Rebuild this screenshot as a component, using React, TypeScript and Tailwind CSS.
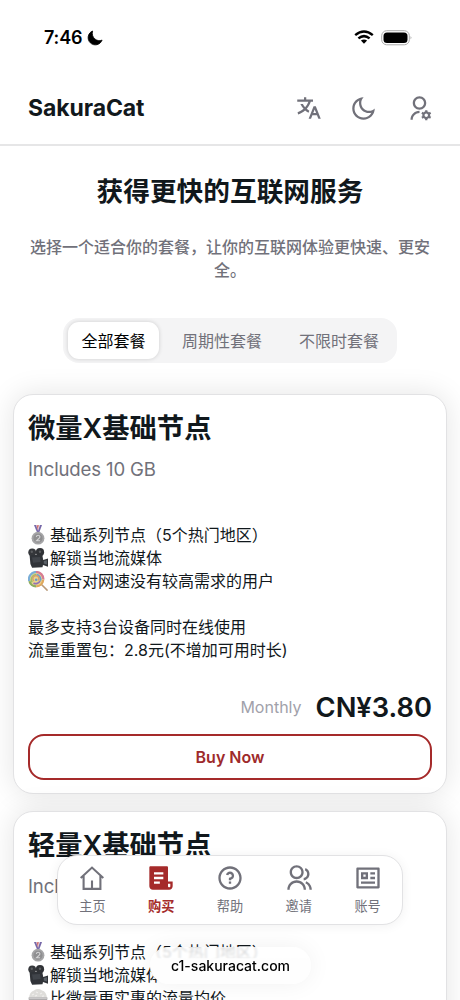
import React from "react";
import {
  RiTranslate2,
  RiMoonLine,
  RiUserSettingsLine,
  RiFileList3Fill,
  RiQuestionLine,
  RiGroupLine,
  RiProfileLine,
} from "react-icons/ri";

function Medal() {
  return (
    <svg viewBox="0 0 20 20" className="h-5 w-5">
      <path d="M6 0h8l-3 8H9z" fill="#eceaf2" />
      <path d="M6 0h2l2.5 7-1.2 1z" fill="#7668a8" />
      <path d="M14 0h-2L9.7 7l1.3 1z" fill="#7668a8" />
      <path d="M8.6 0h1l.8 4-.6 1zM11.2 0h-.8l-.5 4z" fill="#d2605f" />
      <circle cx="10" cy="13.2" r="6.4" fill="#a5a5a7" />
      <circle cx="10" cy="13.2" r="5" fill="#8f8f91" stroke="#aaaaac" strokeWidth=".7" />
      <path d="M8.3 11.8q.3-1.5 1.8-1.5t1.8 1.4q0 .9-1.2 1.9l-2.2 2.2h3.6" fill="none" stroke="#d4d4d5" strokeWidth="1.1" />
    </svg>
  );
}

function Camera() {
  return (
    <svg viewBox="0 0 20 20" className="h-5 w-5">
      <circle cx="4.2" cy="4.3" r="3.9" fill="#35373b" />
      <circle cx="12" cy="4.2" r="4.1" fill="#303236" />
      <path d="M1.6 7.2l12.6-.6 1 5.4 4.8-1.6v8.4l-5-1.9-.5 2.4-10.4.4L2.4 16z" fill="#303338" />
      <path d="M4 9.5l8-.5.6 5-7.6.8z" fill="#40444a" />
      <path d="M15.8 13l3.1-.8v4.4l-3.1-1.1z" fill="#5b6168" />
      <circle cx="3.8" cy="3.8" r="1.2" fill="#5c5e61" />
      <circle cx="12" cy="3.7" r="1.2" fill="#5c5e61" />
    </svg>
  );
}

function Lollipop() {
  return (
    <svg viewBox="0 0 20 20" className="h-5 w-5">
      <path d="M12.5 12.5l6.6 6.6" stroke="#b99a79" strokeWidth="1.5" strokeLinecap="round" />
      <circle cx="8.3" cy="8.2" r="7.9" fill="#ead68c" />
      <path d="M1.2 10A7.2 7.2 0 0 1 8 1" fill="none" stroke="#7aaed8" strokeWidth="2.2" />
      <path d="M8 1a7.2 7.2 0 0 1 7.4 7.4" fill="none" stroke="#d77b94" strokeWidth="2.2" />
      <path d="M15.2 9a7.2 7.2 0 0 1-7 6.4" fill="none" stroke="#e0a75e" strokeWidth="2.2" />
      <path d="M8 15.3a7 7 0 0 1-6.6-5" fill="none" stroke="#8cac60" strokeWidth="2.2" />
      <path d="M4 11.3A5.2 5.2 0 0 1 8 3.7" fill="none" stroke="#9fbe64" strokeWidth="1.8" />
      <path d="M8.5 3.7a4.6 4.6 0 0 1 3.8 6" fill="none" stroke="#6d9fd0" strokeWidth="1.8" />
      <path d="M12 10a4.5 4.5 0 0 1-6.5 2" fill="none" stroke="#9270b6" strokeWidth="1.8" />
      <path d="M6 10a3 3 0 1 1 4.2-.5" fill="none" stroke="#d9a06e" strokeWidth="1.5" />
      <circle cx="8.2" cy="8.7" r="1.3" fill="#6a9ac5" />
    </svg>
  );
}

function RiceBowl() {
  return (
    <svg viewBox="0 0 20 20" className="h-5 w-5">
      <path d="M1 10Q1.5 3.5 6 2.4 10-.2 14 2.4q4.5 1 5 7.6z" fill="#deddda" />
      <path d="M4 7l2-1M8 4l2 .8M12 6l2-1M7 8l2-.6M14 8.4l2-.5" stroke="#efeeec" strokeWidth="1.1" />
      <path d="M.5 9.5h19Q19 17 13.5 18.6h-7Q1 17 .5 9.5z" fill="#aaa8a9" />
      <path d="M1.2 10.5h17.6" stroke="#cac8c9" strokeWidth="1.2" />
    </svg>
  );
}

function HomeIcon() {
  return (
    <svg viewBox="0 0 28 28" className="h-7 w-7" fill="none" stroke="currentColor" strokeWidth="2.1">
      <path d="M2.7 14.1L14 3.6l11.3 10.5M5.6 12v12.9h16.8V12M14 24.5v-8" />
    </svg>
  );
}

function StatusBar() {
  return (
    <div className="flex h-[74px] items-center justify-between pt-px pr-[47px] pl-[44px] text-black">
      <div className="flex items-center gap-[5px]">
        <span className="text-[18px] leading-6 font-semibold tracking-[-0.15px]">7:46</span>
        <svg viewBox="0 0 16 16" className="h-4 w-4">
          <path d="M5.6 1A7.2 7.2 0 1 0 15.1 10.1C10 12.4 3.8 7.5 5.6 1z" fill="currentColor" stroke="currentColor" strokeWidth=".8" strokeLinejoin="round" />
        </svg>
      </div>
      <div className="flex items-center gap-[7px]">
        <svg viewBox="0 0 20 15" className="h-[15px] w-5" fill="none" stroke="currentColor" strokeWidth="2.5">
          <path d="M1.2 5.1q8.8-7.1 17.6 0M4.4 8.4q5.6-4.6 11.2 0" />
          <path d="M6.9 10.6q3.1-2 6.2 0L10 13.8z" fill="currentColor" stroke="none" />
        </svg>
        <svg viewBox="0 0 32 16" className="h-4 w-8">
          <rect x=".7" y=".7" width="27.6" height="14.1" rx="5" fill="white" stroke="#aaa" />
          <rect x="2.5" y="2.5" width="24" height="10.5" rx="3.5" fill="black" />
          <path d="M29.6 6q1.8 1.8 0 3.5z" fill="#999" />
        </svg>
      </div>
    </div>
  );
}

function Header() {
  return (
    <header className="flex h-[72px] items-center justify-between border-b-2 border-[#e6e6e7] pr-[27px] pb-[2px] pl-[28px]">
      <h1 className="text-[23px] leading-8 font-bold tracking-[-0.1px]">SakuraCat</h1>
      <div className="flex items-center text-[#71717a]">
        <RiTranslate2 size={27} className="mr-[28px]" />
        <RiMoonLine size={27} className="mr-[29px]" />
        <RiUserSettingsLine size={27} />
      </div>
    </header>
  );
}

interface Feature {
  icon: React.ReactNode;
  text: string;
}

function PlanCard({ title, size, features }: { title: string; size: string; features: Feature[] }) {
  return (
    <article className="h-[400px] rounded-[20px] border border-[#e2e2e4] bg-white px-[14px] shadow-[0_0_28px_1px_rgba(0,0,0,0.1)]">
      <h3 className="pt-[15px] text-[27.3px] leading-[38px] font-semibold">{title}</h3>
      <p className="mt-[7px] text-[18.6px] leading-7 tracking-[-0.15px] text-[#71717a]">{size}</p>
      <div className="mt-[41px] text-[16px] leading-[23px]">
        {features.map((feature) => (
          <div key={feature.text} className="flex h-[22.9px] items-center gap-[2px] whitespace-nowrap">
            {feature.icon}
            <span>{feature.text}</span>
          </div>
        ))}
        <p className="mt-[23px]">最多支持3台设备同时在线使用</p>
        <p>流量重置包：2.8元(不增加可用时长)</p>
      </div>
      <div className="mt-[25px] flex h-[40px] items-center justify-end gap-[14px]">
        <span className="text-[16px] text-[#a1a1aa]">Monthly</span>
        <span className="pt-[3px] text-[27.3px] leading-[40px] font-semibold">CN¥3.80</span>
      </div>
      <button className="mt-[7px] h-[46px] w-full rounded-[16px] border-2 border-[#a52a2a] text-[16px] font-semibold text-[#9e2a2b]">
        Buy Now
      </button>
    </article>
  );
}

const firstFeatures: Feature[] = [
  { icon: <Medal />, text: "基础系列节点（5个热门地区）" },
  { icon: <Camera />, text: "解锁当地流媒体" },
  { icon: <Lollipop />, text: "适合对网速没有较高需求的用户" },
];

const secondFeatures: Feature[] = [
  { icon: <Medal />, text: "基础系列节点（5个热门地区）" },
  { icon: <Camera />, text: "解锁当地流媒体" },
  { icon: <RiceBowl />, text: "比微量更实惠的流量均价" },
];

const navItems = [
  { label: "主页", icon: <HomeIcon /> },
  { label: "购买", icon: <RiFileList3Fill size={28} />, active: true },
  { label: "帮助", icon: <RiQuestionLine size={28} /> },
  { label: "邀请", icon: <RiGroupLine size={28} /> },
  { label: "账号", icon: <RiProfileLine size={28} /> },
];

export default function App() {
  return (
    <div
      lang="zh-CN"
      className="relative h-[1000px] w-[460px] overflow-hidden bg-white font-['Inter','Noto_Sans_CJK_SC',sans-serif] text-[#11181c]"
    >
      <StatusBar />
      <Header />
      <main className="px-[13px]">
        <h2 className="pt-[25px] text-center text-[26.7px] leading-[40px] font-bold">获得更快的互联网服务</h2>
        <p className="mx-auto mt-[25px] w-[402px] text-center text-[16px] leading-[23px] font-medium text-[#71717a]">
          选择一个适合你的套餐，让你的互联网体验更快速、更安全。
        </p>
        <div className="mx-auto mt-[36px] flex h-[45px] w-[334px] items-center rounded-[16px] bg-[#f4f4f5] px-[5px] text-[16px] text-[#71717a]">
          <button className="h-[37px] w-[91px] shrink-0 rounded-[11px] bg-white text-black shadow-[0_0_4px_rgba(0,0,0,0.16)]">全部套餐</button>
          <button className="ml-[23px] shrink-0">周期性套餐</button>
          <button className="ml-[37px] shrink-0">不限时套餐</button>
        </div>
        <section className="mt-[31px] flex flex-col gap-[17px]">
          <PlanCard title="微量X基础节点" size="Includes 10 GB" features={firstFeatures} />
          <PlanCard title="轻量X基础节点" size="Includes 50 GB" features={secondFeatures} />
        </section>
      </main>

      <nav className="absolute top-[855px] left-[57px] flex h-[70px] w-[346px] rounded-[20px] border border-[#e2e2e4] bg-white shadow-[0_1px_12px_rgba(0,0,0,0.06)]">
        {navItems.map((item) => (
          <div
            key={item.label}
            className={
              item.active
                ? "flex flex-1 flex-col items-center pt-[8px] text-[13.2px] leading-5 font-bold text-[#a52a2a]"
                : "flex flex-1 flex-col items-center pt-[8px] text-[13.2px] leading-5 text-[#71717a]"
            }
          >
            {item.icon}
            <span className="mt-[4px]">{item.label}</span>
          </div>
        ))}
      </nav>

      <div className="absolute top-[947px] left-[150px] flex h-[37px] w-[161px] items-center justify-center rounded-[19px] bg-[linear-gradient(to_bottom,#ffffffd4_0%,#ffffffd4_28%,#fefefe_32%,#fefefe_100%)] text-[14px] font-medium text-black shadow-[0_0_24px_rgba(0,0,0,0.06)] backdrop-blur-[1px]">
        c1-sakuracat.com
      </div>
    </div>
  );
}
